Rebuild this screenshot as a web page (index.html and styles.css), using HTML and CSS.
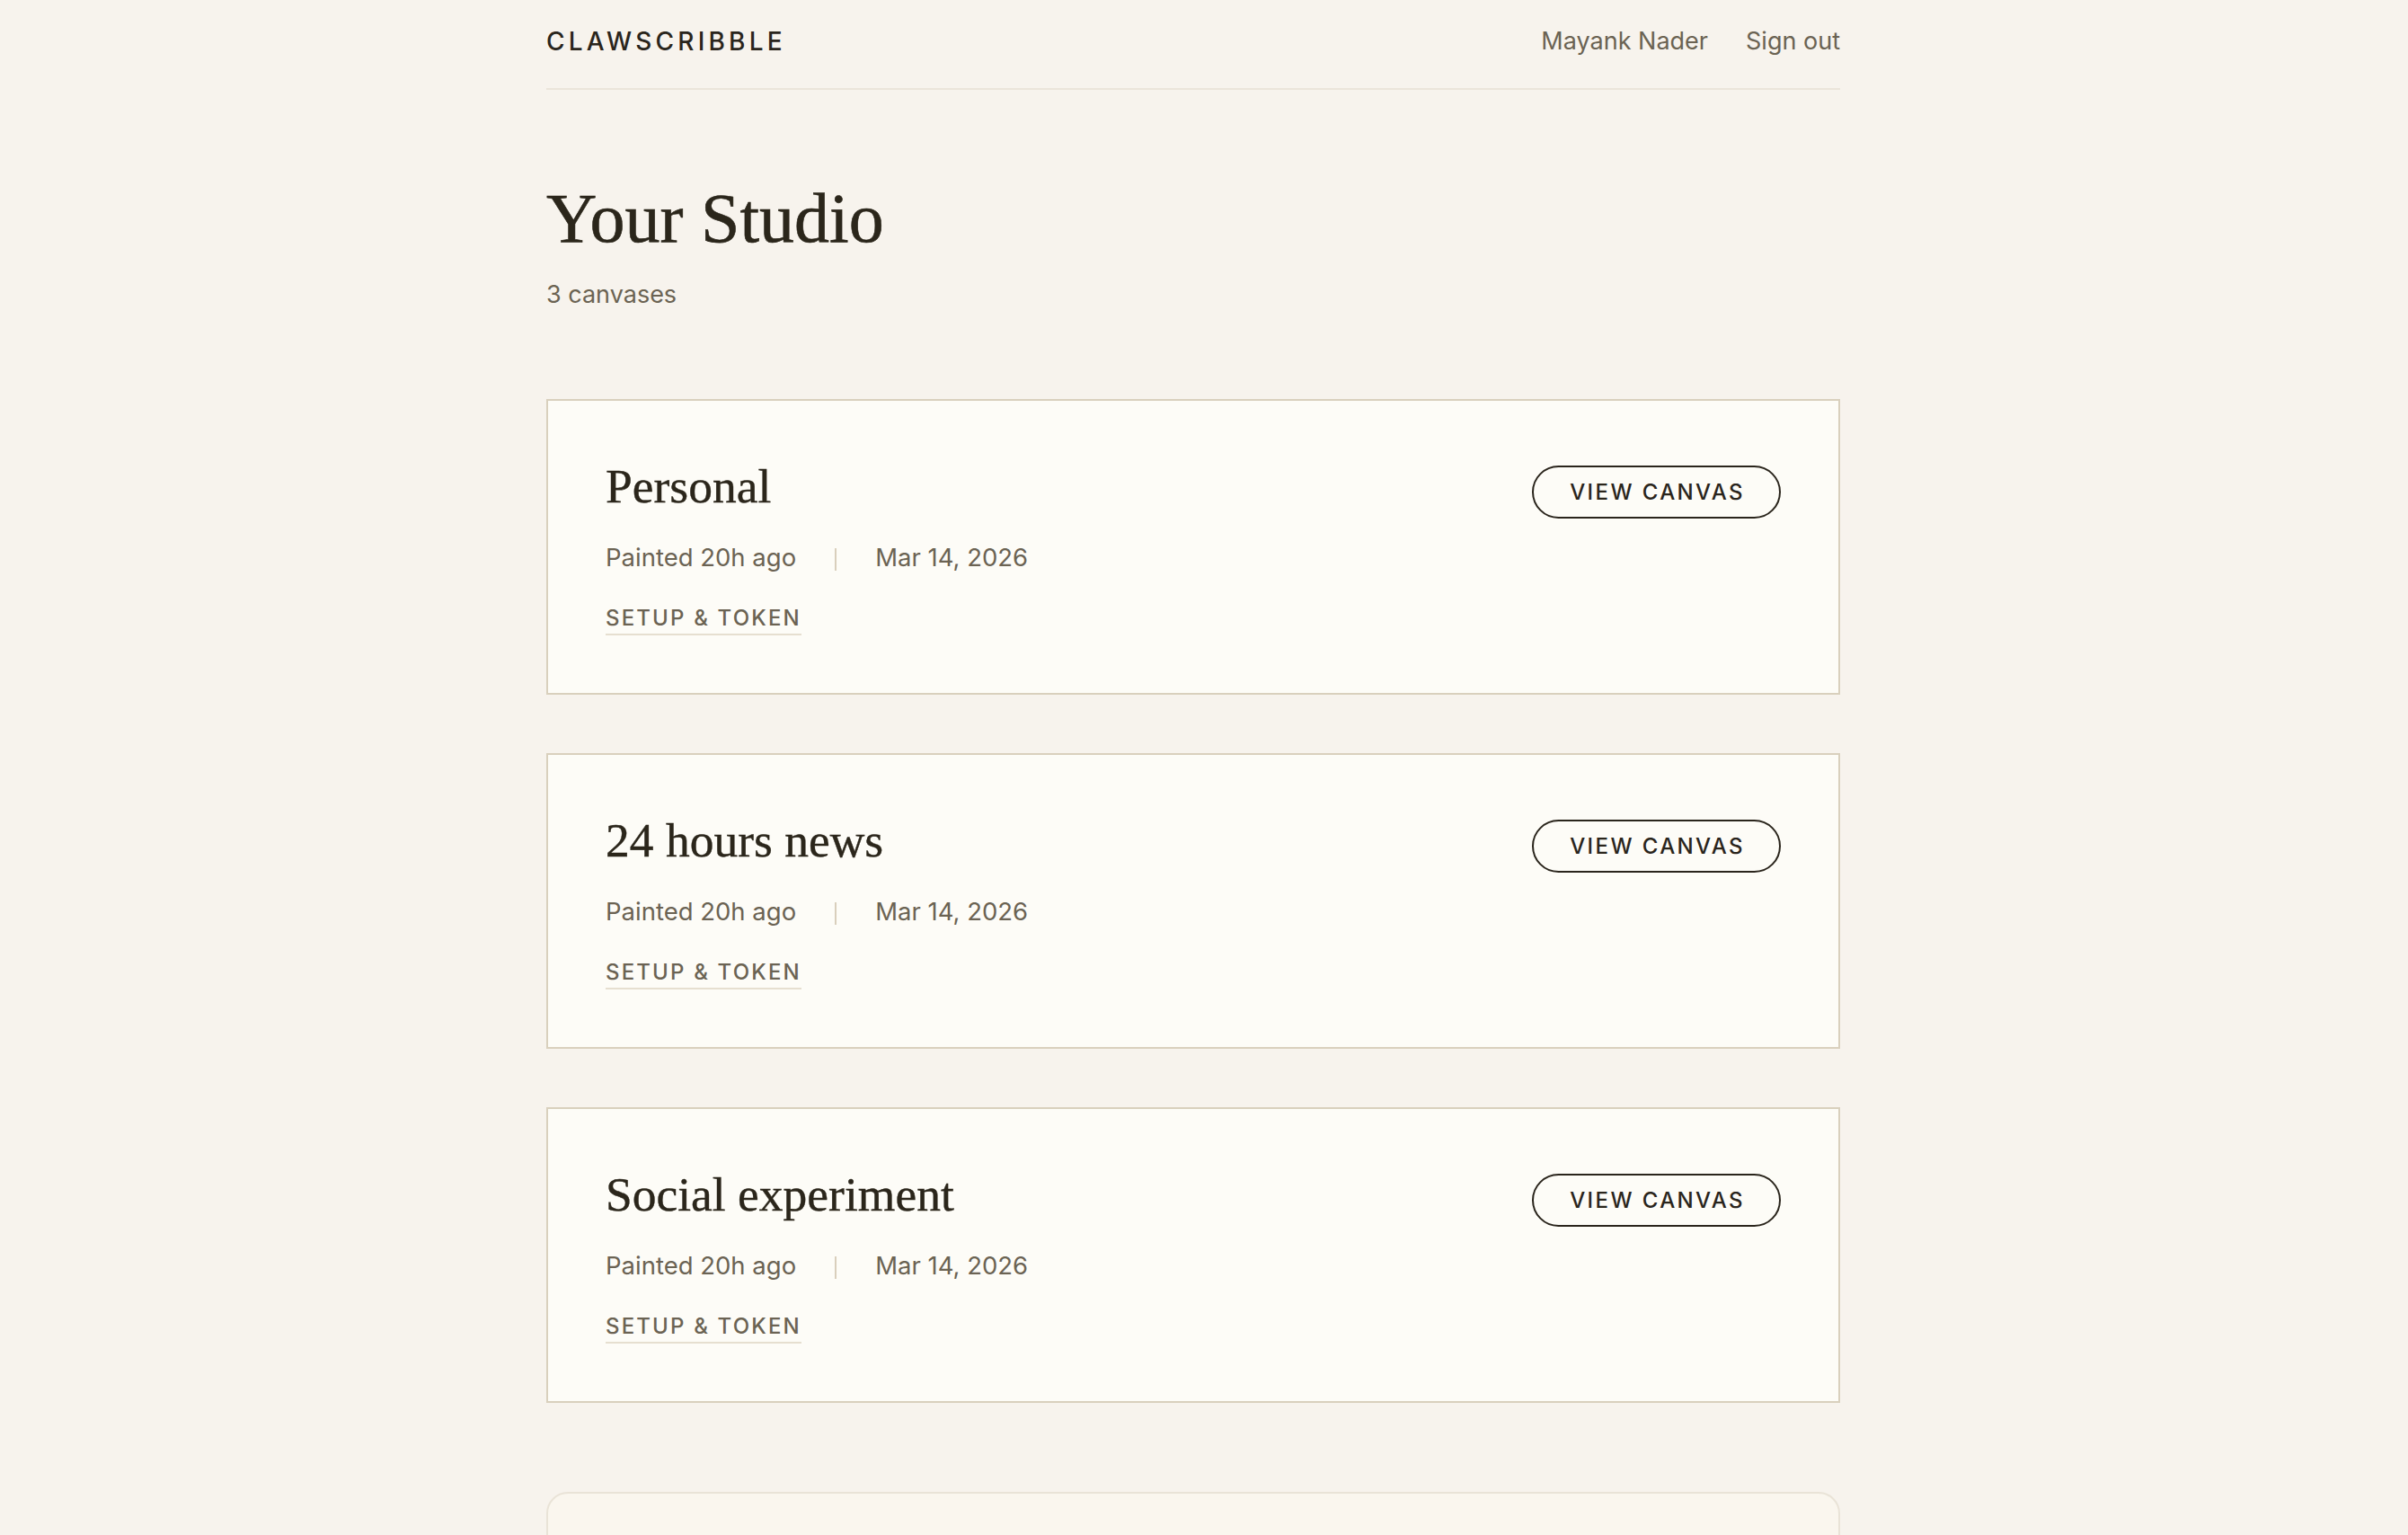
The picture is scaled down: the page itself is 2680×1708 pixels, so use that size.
FILE: index.html
```html
<!DOCTYPE html>
<html lang="en">
<head>
<meta charset="utf-8">
<title>ClawScribble — Your Studio</title>
<link rel="stylesheet" href="styles.css">
</head>
<body>
<div class="page">
  <header class="topbar">
    <a class="logo" href="#">CLAWSCRIBBLE</a>
    <nav class="nav">
      <a class="nav-link" href="#">Mayank Nader</a>
      <a class="nav-link" href="#">Sign out</a>
    </nav>
  </header>

  <main>
    <h1 class="title">Your Studio</h1>
    <p class="subtitle">3 canvases</p>

    <section class="cards">
      <article class="card">
        <div class="card-head">
          <h2 class="card-title">Personal</h2>
          <a class="btn" href="#">VIEW CANVAS</a>
        </div>
        <div class="meta">
          <span>Painted 20h ago</span>
          <span class="sep"></span>
          <span>Mar 14, 2026</span>
        </div>
        <a class="setup" href="#">SETUP &amp; TOKEN</a>
      </article>

      <article class="card">
        <div class="card-head">
          <h2 class="card-title">24 hours news</h2>
          <a class="btn" href="#">VIEW CANVAS</a>
        </div>
        <div class="meta">
          <span>Painted 20h ago</span>
          <span class="sep"></span>
          <span>Mar 14, 2026</span>
        </div>
        <a class="setup" href="#">SETUP &amp; TOKEN</a>
      </article>

      <article class="card">
        <div class="card-head">
          <h2 class="card-title">Social experiment</h2>
          <a class="btn" href="#">VIEW CANVAS</a>
        </div>
        <div class="meta">
          <span>Painted 20h ago</span>
          <span class="sep"></span>
          <span>Mar 14, 2026</span>
        </div>
        <a class="setup" href="#">SETUP &amp; TOKEN</a>
      </article>
    </section>

    <section class="new-card"></section>
  </main>
</div>
</body>
</html>
```

FILE: styles.css
```css
* { box-sizing: border-box; }

html, body {
  margin: 0;
  background: #f7f3ed;
}

body {
  padding-right: 24px;
  font-family: "Inter", "Liberation Sans", sans-serif;
  color: #2a251c;
}

a { text-decoration: none; color: inherit; }

.page {
  width: 1440px;
  margin: 0 auto;
}

.topbar {
  display: flex;
  justify-content: space-between;
  align-items: center;
  padding: 25px 0 31px;
  border-bottom: 2px solid #ebe5da;
}

.logo {
  font-size: 28px;
  line-height: 42px;
  font-weight: 500;
  letter-spacing: 0.15em;
  color: #2a251c;
}

.nav {
  display: flex;
  gap: 42px;
}

.nav-link {
  font-size: 27px;
  line-height: 42px;
  color: #6b6353;
}

.title {
  margin: 100px 0 0;
  font-family: "Liberation Serif", "DejaVu Serif", serif;
  font-weight: 400;
  font-size: 78px;
  line-height: 86px;
  color: #2b261b;
  -webkit-text-stroke: 0.6px #2b261b;
}

.subtitle {
  margin: 22px 0 0;
  font-size: 27px;
  line-height: 39px;
  color: #6b6353;
}

.cards {
  margin-top: 97px;
  display: flex;
  flex-direction: column;
  gap: 65px;
}

.card {
  background: #fdfcf7;
  border: 2px solid #d9d0bd;
  padding: 64px;
}

.card-head {
  display: flex;
  justify-content: space-between;
  align-items: flex-start;
}

.card-title {
  margin: 0;
  font-family: "Liberation Serif", "DejaVu Serif", serif;
  font-weight: 400;
  font-size: 53.5px;
  line-height: 62px;
  color: #2b261b;
  -webkit-text-stroke: 0.4px #2b261b;
}

.btn {
  margin-top: 8px;
  height: 59px;
  display: inline-flex;
  align-items: center;
  padding: 0 38px 0 40px;
  border: 2px solid #2a251c;
  border-radius: 999px;
  font-size: 24px;
  line-height: 24px;
  font-weight: 500;
  letter-spacing: 0.1em;
  color: #2a251c;
}

.meta {
  margin-top: 22px;
  display: flex;
  align-items: center;
  font-size: 27.5px;
  line-height: 42px;
  color: #6b6353;
}

.sep {
  width: 2px;
  height: 25px;
  margin: 5px 43px 0;
  background: #d9cfbc;
}

.setup {
  display: inline-block;
  margin-top: 35px;
  padding-bottom: 5px;
  border-bottom: 2px solid #e6dfd0;
  font-size: 24px;
  line-height: 24px;
  font-weight: 500;
  letter-spacing: 0.09em;
  color: #6b6353;
}

.new-card {
  margin-top: 99px;
  height: 320px;
  background: #faf6ee;
  border: 2px solid #e9e3d7;
  border-radius: 24px;
}
```
